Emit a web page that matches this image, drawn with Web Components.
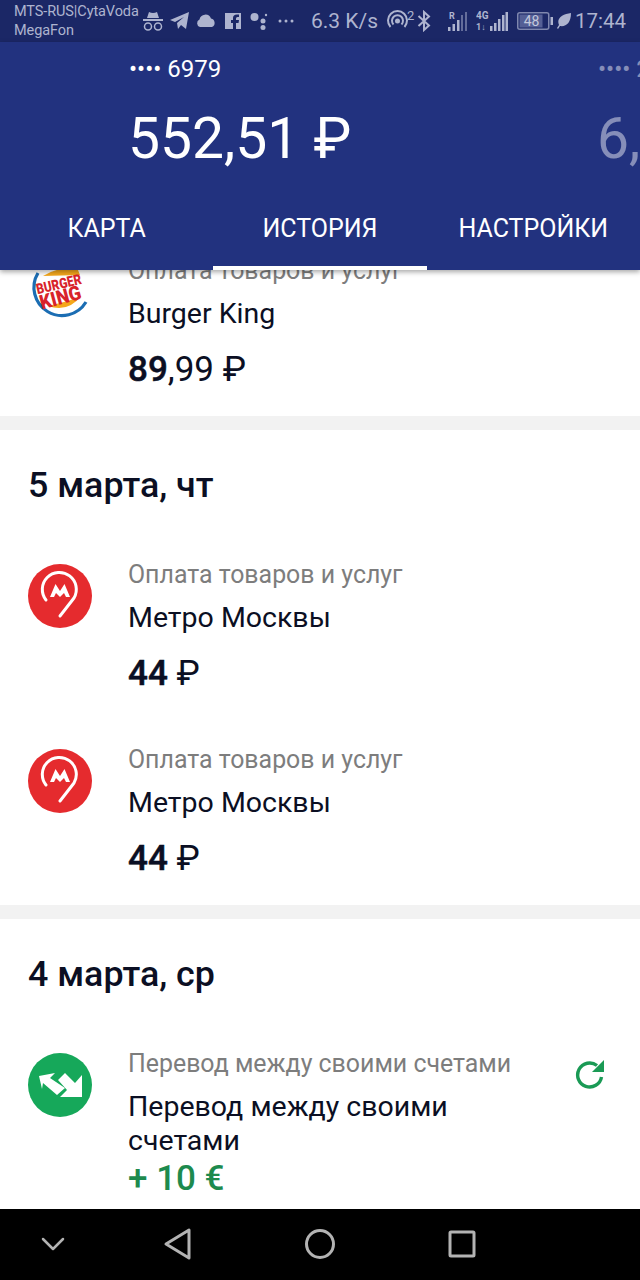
<!doctype html>
<html lang="ru">
<head>
<meta charset="utf-8">
<title>История</title>
<style>
  html, body { margin: 0; height: 100%; }
  body { width: 640px; height: 1280px; overflow: hidden; font-family: Roboto, "Liberation Sans", sans-serif; }
  bank-screen { height: 1280px; }
  op-row b { font-weight: 500; -webkit-text-stroke: .5px currentColor; }
</style>
</head>
<body>
<bank-screen>
  <status-bar slot="status"></status-bar>
  <account-header slot="header"></account-header>

  <op-section>
    <op-row caption="Оплата товаров и услуг" name="Burger King">
      <svg slot="icon" width="64" height="64" viewBox="0 0 64 64">
        <path d="M15 16 Q30 6 50 10 L52 15 Z" fill="#f5a81c"/>
        <path d="M20 46 Q40 53 53 36 L40 41 Z" fill="#f5a81c"/>
        <path d="M10 13 A27 27 0 0 0 58 42" fill="none" stroke="#1b6db3" stroke-width="3.200"/>
        <text x="32" y="29" text-anchor="middle" font-family="Roboto" font-weight="900" font-size="14.500" fill="#d8232a" textLength="46" lengthAdjust="spacingAndGlyphs" transform="rotate(-13 32 29)">BURGER</text>
        <text x="34" y="44" text-anchor="middle" font-family="Roboto" font-weight="900" font-size="20" fill="#d8232a" textLength="42" lengthAdjust="spacingAndGlyphs" transform="rotate(-15 34 44)">KING</text>
      </svg>
      <span slot="amount"><b>89</b>,99 ₽</span>
    </op-row>
  </op-section>

  <op-section title="5 марта, чт">
    <op-row caption="Оплата товаров и услуг" name="Метро Москвы">
      <metro-icon slot="icon"></metro-icon>
      <span slot="amount"><b>44</b> ₽</span>
    </op-row>
    <op-row caption="Оплата товаров и услуг" name="Метро Москвы">
      <metro-icon slot="icon"></metro-icon>
      <span slot="amount"><b>44</b> ₽</span>
    </op-row>
  </op-section>

  <op-section title="4 марта, ср">
    <op-row caption="Перевод между своими счетами" name="Перевод между своими счетами">
      <svg slot="icon" width="64" height="64" viewBox="0 0 64 64">
        <circle cx="32" cy="32" r="32" fill="#16a85a"/>
        <path d="M11 23 L27 20 L22 25 L37 35 L29 42 L15 30 L14 36 Z" fill="#fff"/>
        <path d="M54 44 L32 44 L39 37 L30 27 L37 20 L47 30 L54 22 Z" fill="#fff"/>
      </svg>
      <svg slot="action" width="32" height="32" viewBox="0 0 32 32">
        <path d="M26.500 20 A12 12 0 1 1 22 8.500" fill="none" stroke="#1a9a55" stroke-width="3.400"/>
        <path d="M29 3 L29 15 L17 15 Z" fill="#1a9a55"/>
      </svg>
      <span slot="amount" style="color:#1d8a4e;font-weight:500">+ 10 €</span>
    </op-row>
  </op-section>

  <nav-bar slot="nav"></nav-bar>
</bank-screen>

<script>
class BankScreen extends HTMLElement {
  constructor() {
    super();
    this.attachShadow({ mode: "open" });
    this.shadowRoot.innerHTML = `
      <style>
        :host { display: flex; flex-direction: column; width: 640px; background: #f2f2f2; }
        .list { flex: 1; min-height: 0; overflow: hidden; }
        .inner { margin-top: -13px; display: flex; flex-direction: column; gap: 14px; }
        .top { position: relative; z-index: 1; }
      </style>
      <div class="top"><slot name="status"></slot><slot name="header"></slot></div>
      <div class="list"><div class="inner"><slot></slot></div></div>
      <slot name="nav"></slot>
    `;
  }
}

class StatusBar extends HTMLElement {
  constructor() {
    super();
    this.attachShadow({ mode: "open" });
    this.shadowRoot.innerHTML = `
      <style>
        :host { display: flex; align-items: center; height: 42px; background: #1b2766; color: #aeb4cf; font-family: Roboto, sans-serif; box-sizing: border-box; padding-left: 14px; }
        .ops { width: 128px; font-size: 14.500px; line-height: 19px; white-space: nowrap; letter-spacing: -.1px; }
        svg { display: block; flex: none; }
        .speed { font-size: 21px; margin-left: 17px; width: 73px; white-space: nowrap; }
        .time { font-size: 20.500px; margin-left: 4px; white-space: nowrap; }
      </style>
      <div class="ops">MTS-RUS|CytaVoda<br>MegaFon</div>
      <svg width="22" height="24" viewBox="0 0 22 24" fill="#aeb4cf"><path d="M5 9 L7 3 Q11 5 15 3 L17 9 Z M1 10 H21 V12 H1 Z"/><g fill="none" stroke="#aeb4cf" stroke-width="1.500"><circle cx="6" cy="17.500" r="3.500"/><circle cx="16" cy="17.500" r="3.500"/></g></svg>
      <svg style="margin-left:6px" width="20" height="20" viewBox="0 0 20 20" fill="#aeb4cf"><path d="M0 9 L19 1 L16 18 L11 14 L8 18 L7 12 L14 6 L5 11 Z"/></svg>
      <svg style="margin-left:6px" width="20" height="14" viewBox="0 0 20 14" fill="#aeb4cf"><path d="M4 13 A4 4 0 0 1 3.500 5.500 A6 6 0 0 1 15 4.500 A4.500 4.500 0 0 1 16 13 Z"/></svg>
      <svg style="margin-left:9px" width="16" height="16" viewBox="0 0 16 16"><path d="M0 0 H16 V16 H11 V10 H13.500 L14 7 H11 V5.500 Q11 4 12.500 4 H14 V1.500 H12 Q8 1.500 8 5 V7 H6 V10 H8 V16 H0 Z" fill="#aeb4cf"/></svg>
      <svg style="margin-left:9px" width="18" height="18" viewBox="0 0 18 18" fill="#aeb4cf"><circle cx="4.500" cy="5" r="4"/><circle cx="13" cy="9" r="2.500"/><circle cx="13" cy="15.500" r="2.500"/><circle cx="16" cy="3" r="1.200"/></svg>
      <svg style="margin-left:10px" width="16" height="4" viewBox="0 0 16 4" fill="#aeb4cf"><circle cx="2" cy="2" r="1.500"/><circle cx="8" cy="2" r="1.500"/><circle cx="14" cy="2" r="1.500"/></svg>
      <div class="speed">6.3 K/s</div>
      <svg style="margin-left:2px" width="30" height="24" viewBox="0 0 30 24" fill="none" stroke="#aeb4cf" stroke-width="2"><path d="M4.500 18 A9.500 9.500 0 1 1 18.500 18"/><path d="M7.500 15.500 A5.500 5.500 0 1 1 15.500 15.500"/><circle cx="11.500" cy="12" r="1.500" fill="#aeb4cf"/><text x="21" y="11" font-family="Roboto" font-size="13" fill="#aeb4cf" stroke="none">2</text></svg>
      <svg style="margin-left:1px" width="14" height="22" viewBox="0 0 14 22" fill="none" stroke="#aeb4cf" stroke-width="2"><path d="M1.500 6 L12 15.500 L7 20 V2 L12 6.500 L1.500 16"/></svg>
      <svg style="margin-left:17px" width="19" height="20" viewBox="0 0 19 20" fill="#aeb4cf"><text x="1" y="8" font-family="Roboto" font-weight="700" font-size="9">R</text><rect x="0" y="16" width="2.500" height="4"/><rect x="4.500" y="13" width="2.500" height="7"/><rect x="9" y="9" width="2.500" height="11"/><rect x="13" y="4" width="2" height="16" opacity=".5"/><rect x="17" y="1" width="2" height="19" opacity=".5"/></svg>
      <svg style="margin-left:9px" width="32" height="20" viewBox="0 0 32 20" fill="#aeb4cf"><text x="0" y="8" font-family="Roboto" font-weight="700" font-size="10">4G</text><text x="0" y="19" font-family="Roboto" font-weight="700" font-size="9">1↓</text><rect x="14" y="15" width="2.500" height="5"/><rect x="18" y="12" width="2.500" height="8"/><rect x="22" y="8" width="2.500" height="12"/><rect x="26" y="4" width="2.500" height="16"/><rect x="29.500" y="1" width="2.500" height="19"/></svg>
      <svg style="margin-left:9px" width="36" height="18" viewBox="0 0 36 18"><rect x=".75" y=".75" width="31" height="16.500" rx="2" fill="none" stroke="#7f87ae" stroke-width="1.500"/><rect x="2.500" y="2.500" width="23" height="13" fill="#545f95"/><rect x="33.500" y="5" width="2.500" height="8" fill="#aeb4cf"/><text x="14.500" y="14" text-anchor="middle" font-family="Roboto" font-size="14" fill="#c3c8dc">48</text></svg>
      <svg style="margin-left:4px" width="14" height="16" viewBox="0 0 14 16" fill="#aeb4cf"><path d="M14 0 C14 10 9 14 3 13 L1 16 L0 15 L2 12 C-1 5 6 1 14 0 Z"/></svg>
      <div class="time">17:44</div>
    `;
  }
}

class AccountHeader extends HTMLElement {
  constructor() {
    super();
    this.attachShadow({ mode: "open" });
    this.shadowRoot.innerHTML = `
      <style>
        :host { display: block; height: 228px; background: #22327f; color: #fff; font-family: Roboto, sans-serif; box-shadow: 0 2px 5px rgba(0,0,0,.35); overflow: hidden; }
        .cards { display: flex; padding: 13px 0 0 129px; white-space: nowrap; }
        .card { flex: none; width: 469px; }
        .card.next { opacity: .45; }
        .num { font-size: 24px; line-height: 28px; }
        .sum { font-size: 57px; line-height: 70px; margin: 21px 0 0 -1px; }
        .tabs { display: grid; grid-template-columns: repeat(3, 1fr); margin-top: 12px; }
        .tab { height: 84px; box-sizing: border-box; display: flex; align-items: center; justify-content: center; font-size: 25px; }
        .tab.active { box-shadow: inset 0 -4px 0 #fff; }
      </style>
      <div class="cards">
        <div class="card"><div class="num">•••• 6979</div><div class="sum">552,51 ₽</div></div>
        <div class="card next"><div class="num">•••• 2</div><div class="sum">6,</div></div>
      </div>
      <div class="tabs">
        <div class="tab">КАРТА</div>
        <div class="tab active">ИСТОРИЯ</div>
        <div class="tab">НАСТРОЙКИ</div>
      </div>
    `;
  }
}

class OpSection extends HTMLElement {
  constructor() {
    super();
    this.attachShadow({ mode: "open" });
    const title = this.getAttribute("title");
    this.shadowRoot.innerHTML = `
      <style>
        :host { display: flex; flex-direction: column; gap: 53px; background: #fff; padding: 0 0 27px; }
        h2 { margin: 35px 0 3px 28px; font: 500 35.800px/40px Roboto, sans-serif; color: #0b0f23; }
      </style>
      ${title ? `<h2>${title}</h2>` : ""}
      <slot></slot>
    `;
  }
}

class OpRow extends HTMLElement {
  constructor() {
    super();
    this.attachShadow({ mode: "open" });
    this.shadowRoot.innerHTML = `
      <style>
        :host { display: grid; grid-template-columns: 64px 428px 32px; column-gap: 36px; padding-left: 28px; font-family: Roboto, sans-serif; }
        .icon { padding-top: 3px; }
        .icon ::slotted(*) { display: block; }
        .caption { font-size: 24.900px; line-height: 28px; color: #7d7d7d; white-space: nowrap; }
        .name { font-size: 28.500px; line-height: 34px; min-height: 52px; margin-top: 12px; color: #0b0f23; }
        .amount { font-size: 35px; line-height: 40px; margin: 1px 0 -1px; color: #0b0f23; }
        .amount ::slotted(*) { display: block; }
        .action { padding-top: 7px; margin-left: -17px; }
      </style>
      <div class="icon"><slot name="icon"></slot></div>
      <div>
        <div class="caption">${this.getAttribute("caption")}</div>
        <div class="name">${this.getAttribute("name")}</div>
        <div class="amount"><slot name="amount"></slot></div>
      </div>
      <div class="action"><slot name="action"></slot></div>
    `;
  }
}

class MetroIcon extends HTMLElement {
  constructor() {
    super();
    this.attachShadow({ mode: "open" });
    this.shadowRoot.innerHTML = `
      <style>:host { display: block; width: 64px; height: 64px; } svg { display: block; }</style>
      <svg width="64" height="64" viewBox="0 0 64 64">
        <circle cx="32" cy="32" r="32" fill="#e52b2e"/>
        <path d="M18 36 A17 17 0 1 1 46 34 L32 52" fill="none" stroke="#fff" stroke-width="3" stroke-linecap="round" stroke-linejoin="round"/>
        <path d="M22 33 L27.500 20 L32 27 L36.500 20 L42 33 H38 L36 29 L32 33 L28 29 L26 33 Z" fill="#fff"/>
      </svg>
    `;
  }
}

class NavBar extends HTMLElement {
  constructor() {
    super();
    this.attachShadow({ mode: "open" });
    this.shadowRoot.innerHTML = `
      <style>
        :host { display: flex; height: 71px; box-sizing: border-box; background: #000; padding: 15px 0 0 33px; flex: none; }
        svg { display: block; fill: none; stroke: #b3b3b3; stroke-width: 3; stroke-linejoin: round; stroke-linecap: round; }
      </style>
      <svg width="40" height="40" viewBox="0 0 40 40" style="margin-right:85px"><path d="M10 15 L20 25 L30 15" stroke-width="2.500"/></svg>
      <svg width="40" height="40" viewBox="0 0 40 40" style="margin-right:102px"><path d="M31 6 V34 L8 20 Z"/></svg>
      <svg width="40" height="40" viewBox="0 0 40 40" style="margin-right:102px"><circle cx="20" cy="20" r="13.500"/></svg>
      <svg width="40" height="40" viewBox="0 0 40 40"><rect x="8" y="8" width="24" height="24" rx="1"/></svg>
    `;
  }
}

customElements.define("bank-screen", BankScreen);
customElements.define("status-bar", StatusBar);
customElements.define("account-header", AccountHeader);
customElements.define("op-section", OpSection);
customElements.define("op-row", OpRow);
customElements.define("metro-icon", MetroIcon);
customElements.define("nav-bar", NavBar);
</script>
</body>
</html>
